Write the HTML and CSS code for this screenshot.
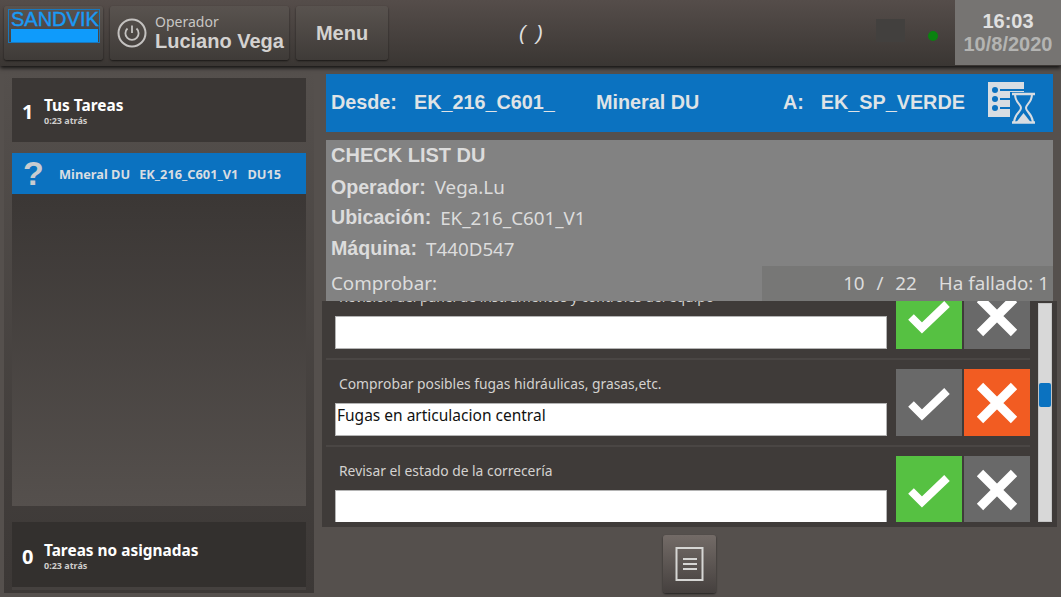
FILE: index.html
```html
<!DOCTYPE html>
<html lang="en">
<head>
    <meta charset="UTF-8">
    <title>Check List</title>
    <link rel="stylesheet" href="styles.css">
</head>
<body>
    <header class="topbar">
        <div class="top-btn logo-btn">
            <div class="logo">
                <span class="logo-text">SANDVIK</span>
                <span class="logo-bar"></span>
            </div>
        </div>
        <div class="top-btn operator-btn">
            <svg class="power" width="32" height="32" viewBox="0 0 32 32" fill="none" stroke="#c4c2c0">
                <circle cx="16" cy="16" r="13.5" stroke-width="2"/>
                <path d="M11.5 11.5a6.6 6.6 0 1 0 9 0M16 8.5v7.5" stroke-width="1.8"/>
            </svg>
            <div class="operator-text">
                <span class="operator-label">Operador</span>
                <span class="operator-name">Luciano Vega</span>
            </div>
        </div>
        <div class="top-btn menu-btn">Menu</div>
        <div class="parens">( )</div>
        <div class="signal"></div>
        <div class="status-dot"></div>
        <div class="clock">
            <span class="clock-time">16:03</span>
            <span class="clock-date">10/8/2020</span>
        </div>
    </header>

    <main class="content">
        <aside class="sidebar">
            <section class="group-head">
                <span class="group-count">1</span>
                <div>
                    <div class="group-title">Tus Tareas</div>
                    <div class="group-time">0:23 atrás</div>
                </div>
            </section>
            <div class="task-item">
                <span class="task-mark">?</span>
                <span class="task-text">Mineral DU</span>
                <span class="task-text">EK_216_C601_V1</span>
                <span class="task-text">DU15</span>
            </div>
            <div class="task-rule"></div>
            <div class="task-empty"></div>
            <section class="group-head group-foot">
                <span class="group-count">0</span>
                <div>
                    <div class="group-title">Tareas no asignadas</div>
                    <div class="group-time">0:23 atrás</div>
                </div>
            </section>
        </aside>

        <section class="detail">
            <div class="route">
                <span class="route-label">Desde:</span>
                <span class="route-from">EK_216_C601_</span>
                <span class="route-cargo">Mineral DU</span>
                <span class="route-label route-a">A:</span>
                <span class="route-to">EK_SP_VERDE</span>
                <svg class="route-icon" width="48" height="42" viewBox="0 0 48 42">
                    <path d="M0 0h36v35H0z" fill="#d8dde2"/>
                    <g fill="#0b72c0">
                        <circle cx="7" cy="8" r="3"/>
                        <circle cx="7" cy="17" r="3"/>
                        <circle cx="7" cy="26" r="3"/>
                        <rect x="12" y="7" width="24" height="2"/>
                        <rect x="12" y="16" width="24" height="2"/>
                        <rect x="12" y="25" width="24" height="2"/>
                    </g>
                    <path d="M22 10h26v32H22z" fill="#0b72c0"/>
                    <path d="M24 12h23M24 40.500h23" stroke="#d8dde2" stroke-width="2.400"/>
                    <path d="M27 12c0 9 6 10 6 14s-6 5-7 14M44 12c0 9-6 10-6 14s6 5 7 14" fill="none" stroke="#d8dde2" stroke-width="2"/>
                    <path d="M35.500 31l-7 9h14z" fill="#d8dde2"/>
                </svg>
            </div>

            <div class="summary">
                <div class="summary-title">CHECK LIST DU</div>
                <div class="summary-row"><b>Operador:</b><span>Vega.Lu</span></div>
                <div class="summary-row"><b>Ubicación:</b><span>EK_216_C601_V1</span></div>
                <div class="summary-row"><b>Máquina:</b><span>T440D547</span></div>
                <div class="summary-foot">
                    <span class="summary-check">Comprobar:</span>
                    <div class="summary-progress">
                        <span class="progress-count">10 / 22</span>
                        <span>Ha fallado: 1</span>
                    </div>
                </div>
            </div>

            <div class="checklist">
                <div class="check-rows">
                    <div class="check-row first-row">
                        <div class="check-main">
                            <div class="check-label">Revisión del panel de instrumentos y controles del equipo</div>
                            <div class="check-input"></div>
                        </div>
                        <div class="check-btn is-ok"><svg class="tick" viewBox="0 0 44 36"><path d="M4 19l11 11L40 6"/></svg></div>
                        <div class="check-btn"><svg class="cross" viewBox="0 0 44 44"><path d="M5 5l34 34M39 5L5 39"/></svg></div>
                    </div>
                    <div class="check-row">
                        <div class="check-main">
                            <div class="check-label">Comprobar posibles fugas hidráulicas, grasas,etc.</div>
                            <div class="check-input">Fugas en articulacion central</div>
                        </div>
                        <div class="check-btn"><svg class="tick" viewBox="0 0 44 36"><path d="M4 19l11 11L40 6"/></svg></div>
                        <div class="check-btn is-fail"><svg class="cross" viewBox="0 0 44 44"><path d="M5 5l34 34M39 5L5 39"/></svg></div>
                    </div>
                    <div class="check-row">
                        <div class="check-main">
                            <div class="check-label">Revisar el estado de la correcería</div>
                            <div class="check-input"></div>
                        </div>
                        <div class="check-btn is-ok"><svg class="tick" viewBox="0 0 44 36"><path d="M4 19l11 11L40 6"/></svg></div>
                        <div class="check-btn"><svg class="cross" viewBox="0 0 44 44"><path d="M5 5l34 34M39 5L5 39"/></svg></div>
                    </div>
                </div>
                <div class="scrollbar"><div class="scroll-thumb"></div></div>
            </div>

            <div class="bottom-actions">
                <div class="notes-btn">
                    <svg width="29" height="34" viewBox="0 0 29 34" fill="none" stroke="#d6d6d4">
                        <rect x="1.500" y="1" width="26" height="32" stroke-width="2"/>
                        <path d="M8 12h14M8 17h14M8 22h14" stroke-width="2"/>
                    </svg>
                </div>
            </div>
        </section>
    </main>
</body>
</html>
```

FILE: styles.css
```css
* {
    box-sizing: border-box;
}

html, body {
    margin: 0;
    padding: 0;
}

body {
    width: 1061px;
    height: 597px;
    overflow: hidden;
    display: flex;
    flex-direction: column;
    background-color: #55504d;
    font-family: "Liberation Sans", Arial, sans-serif;
}

/* top bar */
.topbar {
    height: 66px;
    flex: none;
    display: flex;
    align-items: flex-start;
    padding-top: 6px;
    padding-left: 4px;
    background: linear-gradient(#554d4a, #3a3633);
    box-shadow: 0 2px 4px rgba(0, 0, 0, 0.8);
    position: relative;
}

.top-btn {
    height: 54px;
    flex: none;
    margin-right: 7px;
    border-radius: 3px;
    background: linear-gradient(#59534f, #3f3b38);
    box-shadow: 0 1px 2px rgba(0, 0, 0, 0.6);
    color: #d4d2d0;
}

.logo-btn {
    width: 99px;
    padding: 3px 4px;
}

.logo {
    width: 92px;
    height: 34px;
    border: 1px solid #1a78bd;
    padding: 0 1px 0 2px;
    display: flex;
    flex-direction: column;
}

.logo-text {
    color: #1a9af5;
    font-size: 20px;
    line-height: 18px;
    -webkit-text-stroke: 0.4px #1a9af5;
}

.logo-bar {
    height: 13px;
    margin-top: 1px;
    background-color: #0f9bfb;
}

.operator-btn {
    width: 179px;
    display: flex;
    align-items: center;
    padding-left: 6px;
}

.operator-text {
    margin-left: 7px;
    display: flex;
    flex-direction: column;
}

.operator-label {
    font-family: "Noto Sans", sans-serif;
    font-size: 14px;
    line-height: 17px;
    color: #c8c6c4;
}

.operator-name {
    font-size: 20px;
    font-weight: bold;
    line-height: 23px;
}

.menu-btn {
    width: 92px;
    font-size: 20px;
    font-weight: bold;
    text-align: center;
    line-height: 54px;
}

.parens {
    width: 72px;
    flex: none;
    margin-left: 100px;
    color: #e0e0e0;
    font-size: 20px;
    font-style: italic;
    text-align: center;
    word-spacing: 5px;
    line-height: 54px;
}

.signal {
    width: 29px;
    height: 23px;
    flex: none;
    margin-top: 13px;
    margin-left: 309px;
    background-color: #42403e;
}

.status-dot {
    width: 10px;
    height: 10px;
    flex: none;
    margin-top: 25px;
    margin-left: 23px;
    border-radius: 50%;
    background-color: #0a820f;
}

.clock {
    width: 106px;
    height: 65px;
    flex: none;
    margin-top: -6px;
    margin-left: 17px;
    background-color: #767472;
    display: flex;
    flex-direction: column;
    align-items: center;
    padding-top: 10px;
    font-weight: bold;
}

.clock-time {
    font-size: 20px;
    line-height: 23px;
    color: #e0e0e0;
}

.clock-date {
    font-size: 20px;
    line-height: 22px;
    color: #b4b4b2;
}

/* main area */
.content {
    flex: 1;
    display: flex;
    min-height: 0;
}

/* left task column */
.sidebar {
    width: 310px;
    height: 523px;
    flex: none;
    margin-top: 4px;
    margin-left: 4px;
    padding: 8px 8px 3px;
    display: flex;
    flex-direction: column;
    background: linear-gradient(#55504d, #3c3836);
}

.group-head {
    height: 64px;
    flex: none;
    display: flex;
    align-items: center;
    padding-left: 10px;
    padding-top: 2px;
    background-color: #3b3735;
    color: #fff;
    font-family: "Noto Sans", sans-serif;
}

.group-count {
    width: 22px;
    font-size: 20px;
    font-weight: bold;
}

.group-title {
    font-size: 15.400px;
    font-weight: bold;
    line-height: 19px;
}

.group-time {
    font-size: 9px;
    font-weight: bold;
    line-height: 12px;
    color: #cfcdcb;
}

.group-foot {
    height: 68px;
    margin-top: 16px;
    padding-top: 3px;
    background-color: #33302e;
    border-bottom: 3px solid #45413f;
}

.task-item {
    height: 41px;
    flex: none;
    margin-top: 11px;
    display: flex;
    align-items: center;
    padding-left: 11px;
    background-color: #0b72c0;
    color: #d8dde2;
}

.task-mark {
    width: 36px;
    font-size: 34px;
    font-weight: bold;
    color: #c8ccd0;
}

.task-text {
    margin-right: 9px;
    font-family: "Noto Sans", sans-serif;
    font-size: 12.800px;
    font-weight: bold;
}

.task-rule {
    height: 3px;
    flex: none;
    background-color: #3b3735;
}

.task-empty {
    flex: 1;
    background: linear-gradient(#3b3735, #55504d);
}

/* right detail column */
.detail {
    width: 735px;
    flex: none;
    margin-left: 8px;
    padding-top: 8px;
    display: flex;
    flex-direction: column;
}

.route {
    height: 58px;
    flex: none;
    margin: 0 4px;
    display: flex;
    align-items: center;
    padding-left: 5px;
    padding-bottom: 1px;
    background-color: #0b72c0;
    color: #dfe3e6;
    font-size: 19.800px;
    font-weight: bold;
}

.route-from {
    margin-left: 17px;
    width: 182px;
}

.route-cargo {
    width: 187px;
}

.route-to {
    margin-left: 17px;
}

.route-icon {
    margin-left: 23px;
}

.summary {
    height: 161px;
    flex: none;
    margin: 8px 4px 0;
    padding-left: 5px;
    background-color: #828282;
    color: #dcdcdc;
    font-family: "Noto Sans", sans-serif;
    font-size: 18.800px;
    display: flex;
    flex-direction: column;
}

.summary-title {
    height: 32px;
    padding-top: 4px;
    font-family: "Liberation Sans", sans-serif;
    font-size: 20px;
    font-weight: bold;
}

.summary-row {
    height: 31px;
    display: flex;
    align-items: center;
    gap: 9px;
    margin-top: -0.300px;
}

.summary-row b {
    font-family: "Liberation Sans", sans-serif;
    font-size: 19.600px;
}

.summary-foot {
    flex: 1;
    display: flex;
    justify-content: space-between;
    margin-top: 2px;
}

.summary-check {
    padding-top: 4px;
}

.summary-progress {
    width: 291px;
    display: flex;
    justify-content: flex-end;
    gap: 22px;
    padding-top: 4px;
    padding-right: 4px;
    background-color: #777776;
}

.progress-count {
    word-spacing: 7px;
}

.checklist {
    height: 226px;
    flex: none;
    display: flex;
    justify-content: space-between;
    padding: 2px 5px 5px 4px;
    background-color: #3f3b39;
    position: relative;
    z-index: -1;
}

.check-rows {
    width: 704px;
    flex: none;
    overflow: hidden;
    margin-top: -2px;
}

.check-row {
    height: 87px;
    display: flex;
    padding: 9px 0 0 9px;
    border-bottom: 2px solid #4a4644;
}

.first-row {
    margin-top: -28px;
}

.check-main {
    width: 552px;
    flex: none;
    margin-right: 9px;
}

.check-label {
    height: 34px;
    padding: 6px 0 0 4px;
    font-family: "Noto Sans", sans-serif;
    font-size: 13.850px;
    line-height: 18px;
    color: #d4d2d0;
    white-space: nowrap;
}

.check-input {
    height: 33px;
    padding: 0 1px;
    border: 1px solid #b4b4b4;
    background-color: #fff;
    color: #111;
    font-family: "Noto Sans", sans-serif;
    font-size: 15.500px;
    line-height: 22px;
}

.check-btn {
    width: 66px;
    height: 67px;
    flex: none;
    margin-right: 2px;
    display: flex;
    align-items: center;
    justify-content: center;
    background-color: #696969;
}

.is-ok {
    background-color: #56c142;
}

.is-fail {
    background-color: #f25c22;
}

.tick {
    width: 44px;
    height: 36px;
    fill: none;
    stroke: #fff;
    stroke-width: 8;
}

.cross {
    width: 44px;
    height: 44px;
    fill: none;
    stroke: #fff;
    stroke-width: 9;
}

.scrollbar {
    width: 14px;
    height: 219px;
    flex: none;
    padding-top: 79px;
    background-color: #d8d8d8;
    border: 1px solid #c4c4c4;
}

.scroll-thumb {
    height: 24px;
    background-color: #0b72c0;
    border-radius: 2px;
}

.bottom-actions {
    flex: 1;
    display: flex;
    justify-content: center;
    padding-top: 8px;
}

.notes-btn {
    width: 53px;
    height: 58px;
    display: flex;
    align-items: center;
    justify-content: center;
    border-radius: 3px;
    background: linear-gradient(#736b67, #45403e);
    box-shadow: 0 1px 2px rgba(0, 0, 0, 0.6);
}
```
